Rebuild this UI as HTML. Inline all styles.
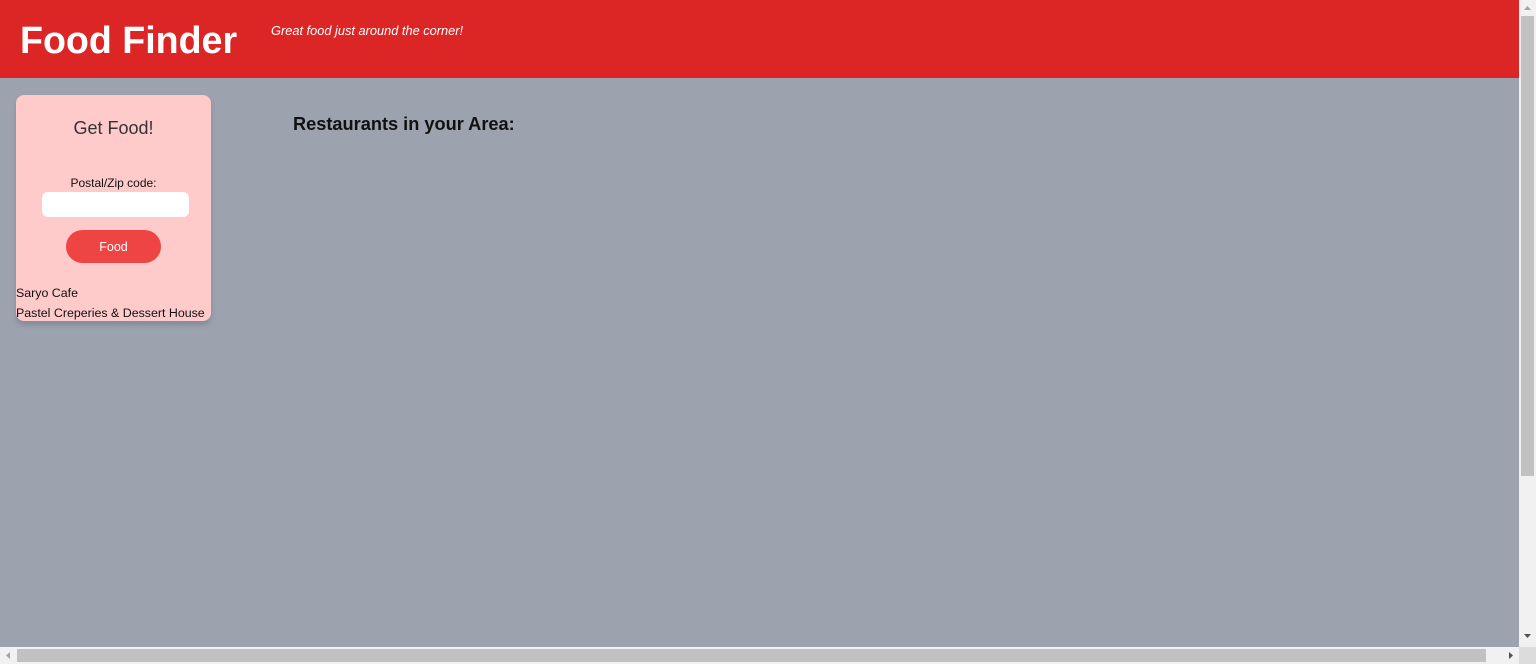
<!DOCTYPE html>
<html><head><meta charset="utf-8"><style>
body{margin:0;width:1536px;height:664px;overflow:hidden;background:#9ca3af;font-family:"Liberation Sans",sans-serif;position:relative}
.hdr{position:absolute;left:0;top:0;width:1519px;height:78px;background:#dc2626}
.t{position:absolute;left:20px;top:17px;color:#fff;font-weight:bold;font-size:37.6px;line-height:46px}
.s{position:absolute;left:271px;top:23px;color:#fff;font-style:italic;font-size:12.8px}
.card{position:absolute;left:16px;top:95px;width:195px;height:226px;background:#fecaca;border-radius:8px;box-shadow:0 4px 6px rgba(0,0,0,.15)}
.gf{position:absolute;width:195px;top:118px;text-align:center;font-size:18px;color:#333;font-weight:300}
.pz{position:absolute;left:16px;width:195px;top:176px;text-align:center;font-size:12px;color:#111}
.in{position:absolute;left:42px;top:192px;width:147px;height:25px;background:#fff;border-radius:6px}
.btn{position:absolute;left:66px;top:230px;width:95px;height:33px;background:#ef4444;border-radius:17px;color:#fff;font-size:12.5px;text-align:center;line-height:35px}
.r{position:absolute;left:16px;font-size:12.4px;color:#111}
.h{position:absolute;left:293px;top:114px;font-weight:bold;font-size:18.2px;color:#111}
.vs{position:absolute;left:1519px;top:0;width:17px;height:647px;background:#f1f1f1}
.vt{position:absolute;left:1521px;top:16px;width:13px;height:460px;background:#c1c1c1}
.hs{position:absolute;left:0;top:647px;width:1519px;height:17px;background:#f1f1f1}
.ht{position:absolute;left:17px;top:649px;width:1469px;height:13px;background:#c1c1c1}
.cr{position:absolute;left:1519px;top:647px;width:17px;height:17px;background:#dcdcdc}
</style></head><body>
<div class="hdr"><div class="t">Food Finder</div><div class="s">Great food just around the corner!</div></div>
<div class="card"></div>
<div class="gf" style="left:16px">Get Food!</div>
<div class="pz">Postal/Zip code:</div>
<div class="in"></div>
<div class="btn">Food</div>
<div class="r" style="top:286px">Saryo Cafe</div>
<div class="r" style="top:306px">Pastel Creperies &amp; Dessert House</div>
<div class="h">Restaurants in your Area:</div>
<div class="vs"></div><div class="vt"></div>
<div class="hs"></div><div class="ht"></div><div class="cr"></div>
<svg style="position:absolute;left:1519px;top:0" width="17" height="647"><path d="M5 10 L8.5 6 L12 10Z" fill="#a3a3a3"/><path d="M5 634 L8.5 638 L12 634Z" fill="#505050"/></svg>
<svg style="position:absolute;left:0;top:647px" width="1519" height="17"><path d="M10 5 L6 8.5 L10 12Z" fill="#a3a3a3"/><path d="M1509 5 L1513 8.5 L1509 12Z" fill="#505050"/></svg>
</body></html>
